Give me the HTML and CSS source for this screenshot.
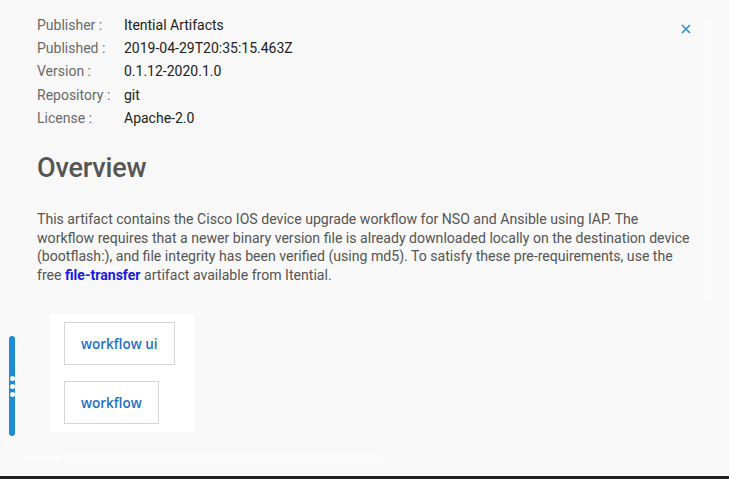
FILE: index.html
```html
<!DOCTYPE html>
<html>
<head>
<meta charset="utf-8">
<link rel="stylesheet" href="styles.css">
</head>
<body>
<div class="page">
  <div class="main">
    <div class="scroll-track"></div>
    <button class="close" aria-label="close">
      <svg width="10" height="10" viewBox="0 0 10 10"><path d="M1 1L9 9M9 1L1 9" stroke="#2b8fd8" stroke-width="1.6"/></svg>
    </button>
    <div class="content">
      <dl class="meta">
        <dt>Publisher :</dt><dd>Itential Artifacts</dd>
        <dt>Published :</dt><dd>2019-04-29T20:35:15.463Z</dd>
        <dt>Version :</dt><dd>0.1.12-2020.1.0</dd>
        <dt>Repository :</dt><dd>git</dd>
        <dt>License :</dt><dd>Apache-2.0</dd>
      </dl>
      <h1 class="title">Overview</h1>
      <p class="desc">This artifact contains the Cisco IOS device upgrade workflow for NSO and Ansible using IAP. The workflow requires that a newer binary version file is already downloaded locally on the destination device (bootflash:), and file integrity has been verified (using md5). To satisfy these pre-requirements, use the free <a class="link" href="#">file-transfer</a> artifact available from Itential.</p>
    </div>
    <div class="lower">
      <div class="handle"><span></span><span></span><span></span></div>
      <div class="tags">
        <div class="tag">workflow ui</div>
        <div class="tag">workflow</div>
      </div>
    </div>
    <div class="footer-strip"><span class="strip-a"></span><span class="strip-b"></span></div>
  </div>
  <div class="bottom-bar"></div>
</div>
</body>
</html>
```
FILE: styles.css
```css
* { box-sizing: border-box; }
html, body { margin: 0; padding: 0; }
body {
  width: 729px;
  height: 479px;
  overflow: hidden;
  background: #f8f8f8;
  font-family: Roboto, "Liberation Sans", sans-serif;
}
.page {
  display: flex;
  flex-direction: column;
  height: 479px;
}
.main {
  position: relative;
  flex: 1;
  display: flex;
  flex-direction: column;
}
.scroll-track {
  position: absolute;
  left: 703px;
  top: 19px;
  width: 10px;
  height: 282px;
  background: #fbfbfb;
  border-radius: 4px;
}
.close {
  position: absolute;
  left: 681px;
  top: 24px;
  width: 10px;
  height: 10px;
  padding: 0;
  border: 0;
  background: none;
  display: flex;
}
.content {
  padding: 13px 32px 0 37px;
}
.meta {
  display: grid;
  grid-template-columns: 87px auto;
  grid-auto-rows: 23.3px;
  margin: 0;
  font-size: 14px;
  align-items: center;
}
.meta dt { color: #6a6a6a; }
.meta dd { margin: 0; color: #222; }
.title {
  margin: 22px 0 0;
  font-size: 27px;
  font-weight: 500;
  color: #555;
  line-height: 34px;
  letter-spacing: -0.2px;
}
.desc {
  margin: 25px 0 0;
  font-size: 14.1px;
  line-height: 18.4px;
  color: #555;
}
.link {
  color: #1a1ae6;
  font-weight: 700;
  text-decoration: none;
}
.lower {
  display: flex;
  align-items: flex-start;
  margin-top: 30px;
  padding-left: 9px;
}
.handle {
  width: 6px;
  height: 100px;
  margin-top: 22px;
  background: #1e8bd6;
  border-radius: 3px;
  display: flex;
  flex-direction: column;
  align-items: center;
  justify-content: center;
  gap: 3px;
}
.handle span {
  width: 5px;
  height: 5px;
  border-radius: 50%;
  background: #fff;
}
.tags {
  margin-left: 35px;
  width: 145px;
  height: 118px;
  background: #fff;
  padding: 8px 0 0 14px;
  display: flex;
  flex-direction: column;
  align-items: flex-start;
  gap: 16px;
}
.tag {
  border: 1px solid #d6d6d6;
  height: 43px;
  padding: 0 16px;
  display: flex;
  align-items: center;
  font-family: "Open Sans", sans-serif;
  font-size: 13.5px;
  font-weight: 600;
  color: #1f6fc7;
}
.footer-strip {
  margin-top: 19px;
  margin-left: 24px;
  display: flex;
  height: 6px;
}
.strip-a { width: 36px; background: #fdfdfd; }
.strip-b { width: 323px; background: #fafafa; }
.bottom-bar {
  height: 3px;
  background: #1e1e1e;
}
```
